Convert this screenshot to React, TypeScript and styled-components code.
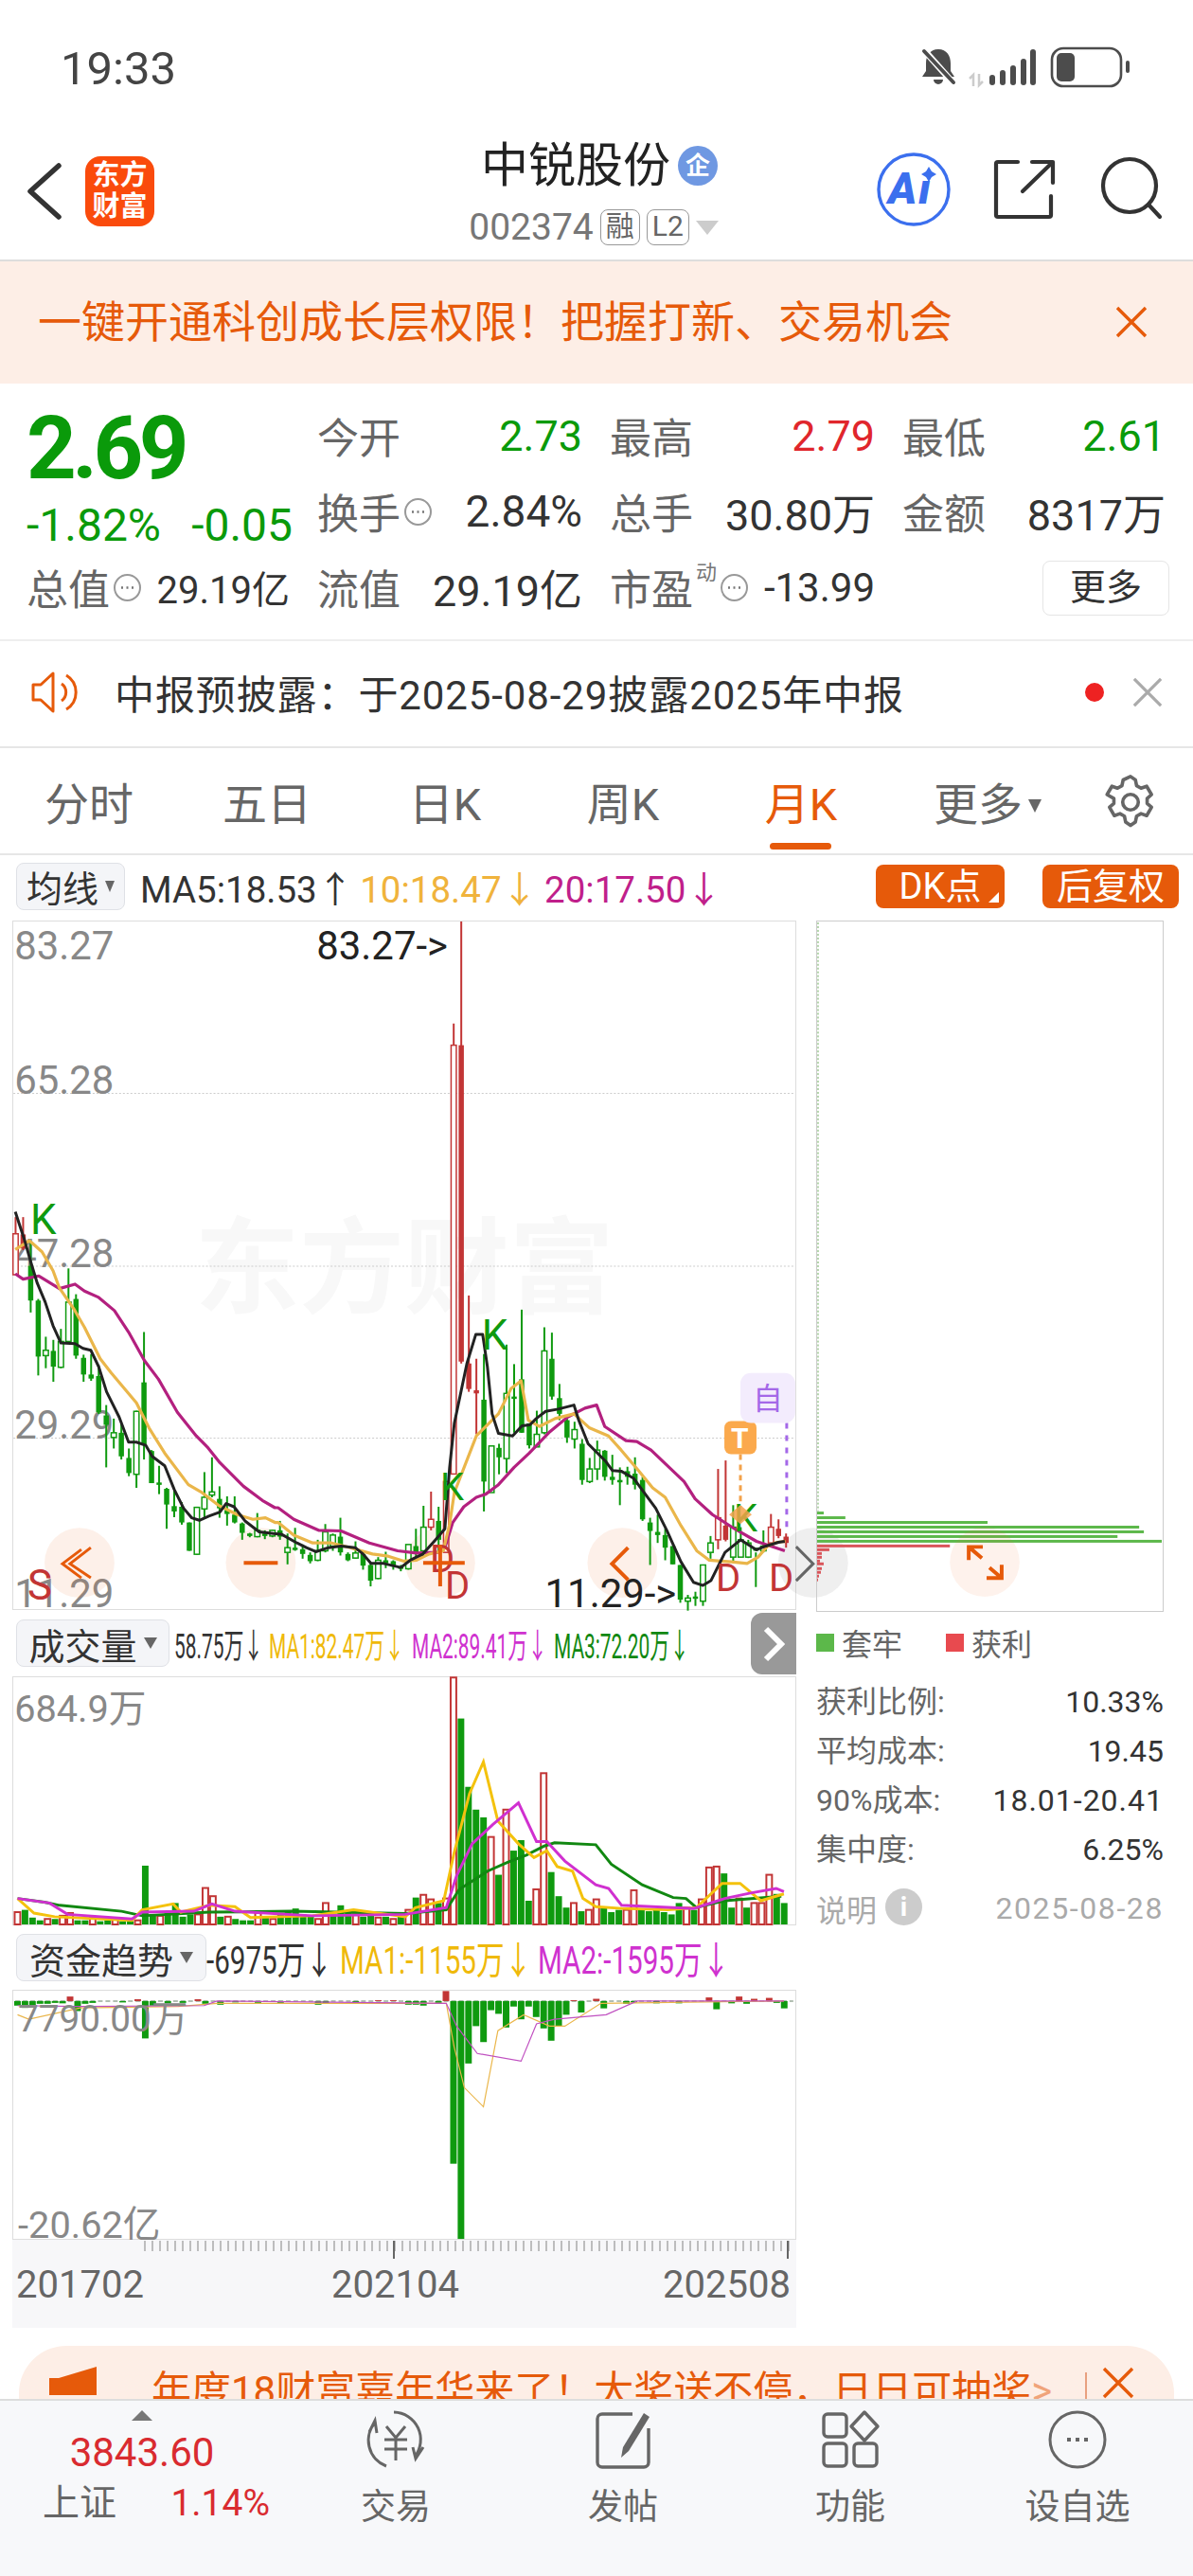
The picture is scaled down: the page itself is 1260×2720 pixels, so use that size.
import React from "react";
import styled, { createGlobalStyle } from "styled-components";

const GlobalStyle = createGlobalStyle`
  html, body {
    margin: 0;
    padding: 0;
    background: #fff;
    font-family: Roboto, "Noto Sans CJK SC", sans-serif;
  }
  * { box-sizing: border-box; }
`;

const ORANGE = "#e65a0a";
const GREEN = "#0f9a0f";
const RED = "#c23535";

const Page = styled.div`
  width: 1260px;
  height: 2720px;
  overflow: hidden;
  background: #fff;
  display: flex;
  flex-direction: column;
`;

const StatusBar = styled.div`
  height: 120px;
  padding: 0 64px;
  display: flex;
  align-items: center;
  justify-content: space-between;
  padding-top: 24px;
  color: #444;
  font-size: 49px;
  svg { margin-right: -1px; margin-top: -2px; }
`;

const NavBar = styled.div`
  height: 156px;
  border-bottom: 2px solid #ddd;
  display: grid;
  grid-template-columns: 400px 1fr 400px;
  align-items: center;
`;

const NavLeft = styled.div`
  display: flex;
  align-items: center;
  gap: 24px;
  padding-left: 28px;
  margin-top: 10px;
`;

const Logo = styled.div`
  width: 73px;
  height: 74px;
  border-radius: 16px;
  background: #fa4b0c;
  color: #fff;
  font-size: 29px;
  font-weight: 700;
  line-height: 33px;
  text-align: center;
  padding-top: 4px;
`;

const NavCenter = styled.div`
  display: flex;
  flex-direction: column;
  align-items: center;
  margin-top: 13px;
`;

const TitleRow = styled.div`
  display: flex;
  align-items: center;
  gap: 8px;
  margin-left: 6px;
  font-size: 50px;
  line-height: 60px;
  color: #222;
`;

const CorpBadge = styled.span`
  width: 42px;
  height: 42px;
  border-radius: 50%;
  background: #6f98e2;
  color: #fff;
  font-size: 26px;
  font-weight: 700;
  line-height: 42px;
  text-align: center;
`;

const CodeRow = styled.div`
  display: flex;
  align-items: center;
  gap: 7px;
  margin: 13px 0 0 -6px;
  font-size: 39px;
  line-height: 44px;
  color: #777;
`;

const TagBox = styled.span`
  height: 38px;
  padding: 0 5px;
  border: 1.5px solid #999;
  border-radius: 8px;
  font-size: 30px;
  line-height: 34px;
  color: #666;
`;

const Caret = styled.span<{ $w?: number; $h?: number; $color?: string }>`
  display: inline-block;
  width: 0;
  height: 0;
  border-left: ${(p) => (p.$w || 20) / 2}px solid transparent;
  border-right: ${(p) => (p.$w || 20) / 2}px solid transparent;
  border-top: ${(p) => p.$h || 14}px solid ${(p) => p.$color || "#666"};
`;

const NavRight = styled.div`
  display: flex;
  justify-content: flex-end;
  padding-right: 26px;
  margin-top: 4px;
`;

const PromoBanner = styled.div`
  height: 129px;
  background: #fdeee6;
  color: ${ORANGE};
  font-size: 46px;
  line-height: 60px;
  display: flex;
  align-items: center;
  justify-content: space-between;
  padding: 0 48px 2px 40px;
`;

const QuoteSection = styled.div`
  height: 272px;
  padding: 16px 25px 0 28px;
  display: grid;
  grid-template-columns: 278px 280px 280px 278px;
  grid-template-rows: 80px 80px 80px;
  column-gap: 29px;
  border-bottom: 2px solid #eee;
`;

const PriceBlock = styled.div`
  grid-row: 1 / span 2;
  display: flex;
  flex-direction: column;
`;

const BigPrice = styled.div`
  color: #0a9a0a;
  font-size: 92px;
  font-weight: 700;
  line-height: 106px;
  letter-spacing: -4.5px;
`;

const ChangeRow = styled.div`
  display: flex;
  justify-content: space-between;
  color: #0a9a0a;
  font-size: 48px;
  line-height: 54px;
  margin-top: 1px;
  width: 281px;
`;

const Cell = styled.div`
  display: flex;
  align-items: center;
  justify-content: space-between;
  white-space: nowrap;
  margin-top: -2px;
`;

const LabelGroup = styled.span`
  display: inline-flex;
  align-items: center;
  gap: 3px;
  position: relative;
`;

const Label = styled.span`
  font-size: 44px;
  color: #666;
`;

const SuperMark = styled.span`
  font-size: 22px;
  color: #777;
  margin-top: -36px;
`;

const Value = styled.span<{ $color?: string; $size?: number }>`
  font-size: ${(p) => p.$size || 45}px;
  color: ${(p) => p.$color || "#333"};
`;

const MoreButton = styled.div`
  justify-self: end;
  align-self: center;
  width: 134px;
  height: 58px;
  border: 1.5px solid #e5e5e5;
  border-radius: 8px;
  color: #333;
  font-size: 38px;
  line-height: 54px;
  text-align: center;
  margin-right: -4px;
`;

const NoticeRow = styled.div`
  height: 113px;
  display: flex;
  align-items: center;
  padding: 0 32px 4px;
  border-bottom: 2px solid #e6e6e6;
  font-size: 42px;
  letter-spacing: 0.9px;
  color: #333;
`;

const NoticeText = styled.span`
  margin-left: 33px;
  flex: 1;
`;

const RedDot = styled.span`
  width: 20px;
  height: 20px;
  border-radius: 50%;
  background: #ee2222;
  margin-right: 30px;
`;

const Tabs = styled.div`
  height: 113px;
  border-bottom: 2px solid #e6e6e6;
  display: grid;
  grid-template-columns: repeat(6, 188px) 1fr;
  align-items: center;
`;

const Tab = styled.div<{ $active?: boolean; $shift?: number }>`
  position: relative;
  text-align: center;
  font-size: 47px;
  padding-left: ${(p) => p.$shift || 0}px;
  color: ${(p) => (p.$active ? ORANGE : "#666")};
  ${(p) =>
    p.$active &&
    `&::after {
      content: "";
      position: absolute;
      left: 61px;
      bottom: -17px;
      width: 65px;
      height: 7px;
      border-radius: 4px;
      background: ${ORANGE};
    }`}
`;

const TabCaret = styled(Caret)`
  margin-left: 6px;
  vertical-align: 8px;
`;

const GearCell = styled.div`
  text-align: center;
  padding-top: 6px;
`;

const LegendRow = styled.div`
  height: 57px;
  display: flex;
  align-items: center;
  padding: 8px 15px 0 17px;
  white-space: nowrap;
`;

const SelectButton = styled.div<{ $width: number }>`
  width: ${(p) => p.$width}px;
  height: 50px;
  flex: none;
  display: flex;
  align-items: center;
  justify-content: center;
  gap: 7px;
  background: #f4f5f8;
  border: 1.5px solid #dfe1e6;
  border-radius: 8px;
  color: #333;
  font-size: 38px;
`;

const LegendText = styled.span<{ $color?: string; $left?: number }>`
  font-size: 38.5px;
  color: ${(p) => p.$color || "#333"};
  margin-left: ${(p) => p.$left || 0}px;
`;

const TagButton = styled.div<{ $width: number; $left?: string }>`
  position: relative;
  width: ${(p) => p.$width}px;
  height: 46px;
  margin-left: ${(p) => p.$left || "40px"};
  background: ${ORANGE};
  border-radius: 8px;
  color: #fff;
  font-size: 38px;
  line-height: 46px;
  text-align: center;
`;

const CornerMark = styled.span`
  position: absolute;
  right: 6px;
  bottom: 6px;
  border-left: 11px solid transparent;
  border-bottom: 11px solid #fff;
`;

const ChartArea = styled.div`
  height: 1498px;
  display: grid;
  grid-template-columns: 828px 367px;
  column-gap: 21px;
  padding: 12px 0 0 13px;
`;

const LeftColumn = styled.div`
  display: flex;
  flex-direction: column;
`;

const ChartBox = styled.svg<{ $h: number }>`
  display: block;
  width: 828px;
  height: ${(p) => p.$h}px;
  overflow: visible;
  border: 1.5px solid #ddd;
  font-family: Roboto, "Noto Sans CJK SC", sans-serif;
`;

const SubLegend = styled.div<{ $h: number }>`
  height: ${(p) => p.$h}px;
  position: relative;
  display: flex;
  align-items: center;
  padding-left: 4px;
  white-space: nowrap;
`;

const Narrow = styled.span<{ $w: number; $s: number; $color?: string; $size?: number; $mr?: number; $ml?: number }>`
  display: inline-block;
  flex: none;
  width: ${(p) => p.$w}px;
  margin-left: ${(p) => p.$ml || 0}px;
  margin-right: ${(p) => p.$mr || 0}px;
  font-size: ${(p) => p.$size || 36}px;
  color: ${(p) => p.$color || "#333"};
  transform: scaleX(${(p) => p.$s});
  transform-origin: left center;
`;

const SidePull = styled.div`
  position: absolute;
  right: 0;
  top: 3px;
  width: 48px;
  height: 65px;
  background: #999;
  border-radius: 12px 0 0 12px;
  display: flex;
  align-items: center;
  justify-content: center;
`;

const AxisBox = styled.div`
  height: 93px;
  background: #f7f7f9;
`;

const AxisLabels = styled.div`
  display: grid;
  grid-template-columns: 333px 350px auto;
  padding-left: 4px;
  margin-top: 2px;
  font-size: 40px;
  color: #666;
`;

const AxisTicks = styled.svg`
  display: block;
  width: 828px;
  height: 22px;
`;

const RightColumn = styled.div`
  display: flex;
  flex-direction: column;
`;

const ChipBox = styled.svg`
  display: block;
  width: 367px;
  height: 730px;
  overflow: visible;
  border: 1.5px solid #ccc;
`;

const ChipLegend = styled.div`
  display: flex;
  align-items: center;
  margin-top: 10px;
  height: 44px;
  font-size: 32px;
  color: #666;
`;

const Swatch = styled.span<{ $color: string; $left?: number }>`
  width: 19px;
  height: 19px;
  background: ${(p) => p.$color};
  margin-left: ${(p) => p.$left || 0}px;
  margin-right: 8px;
`;

const ChipStats = styled.div`
  margin-top: 19px;
  display: flex;
  flex-direction: column;
  gap: 8px;
`;

const ChipRow = styled.div`
  display: flex;
  justify-content: space-between;
  height: 44px;
  line-height: 44px;
  font-size: 32px;
  color: #666;
  b { font-weight: 400; color: #333; }
`;

const WideValue = styled.b`
  letter-spacing: 1px;
`;

const ChipFooter = styled.div`
  display: flex;
  align-items: center;
  justify-content: space-between;
  margin-top: 18px;
  height: 44px;
  font-size: 32px;
  color: #aaa;
`;

const FooterDate = styled.span`
  letter-spacing: 1.6px;
`;

const InfoDot = styled.span`
  display: inline-block;
  width: 39px;
  height: 39px;
  margin-left: 9px;
  border-radius: 50%;
  background: #ccc;
  color: #fff;
  font-size: 28px;
  font-weight: 700;
  line-height: 39px;
  text-align: center;
  vertical-align: top;
  margin-top: 2px;
`;

const AdBanner = styled.div`
  height: 56px;
  margin: 19px 20px 0;
  overflow: hidden;
  background: #fdeee6;
  border-radius: 50px 50px 0 0;
  display: flex;
  align-items: flex-start;
  padding: 22px 32px 0 32px;
  color: ${ORANGE};
  font-size: 42px;
  line-height: 52px;
  white-space: nowrap;
`;

const AdText = styled.span`
  margin-left: 58px;
  width: 986px;
  span { color: #f0a47a; }
`;

const AdBar = styled.span`
  width: 2px;
  height: 34px;
  margin: 6px 16px 0 0;
  background: #e8a080;
`;

const BottomBar = styled.div`
  height: 187px;
  background: #f7f8fa;
  border-top: 2px solid #ddd;
  display: grid;
  grid-template-columns: 298px repeat(4, 240px);
`;

const IndexCell = styled.div`
  padding: 10px 0 0 45px;
  display: flex;
  flex-direction: column;
`;

const IndexPrice = styled.div`
  width: 210px;
  text-align: center;
  color: #d92b30;
  font-size: 42px;
  line-height: 52px;
  margin-top: 8px;
`;

const IndexRow = styled.div`
  display: flex;
  justify-content: space-between;
  align-items: center;
  width: 240px;
  margin-top: 1px;
  font-size: 39px;
  color: #666;
  line-height: 52px;
  span { color: #d92b30; }
`;

const UpMark = styled.div`
  width: 210px;
  display: flex;
  justify-content: center;
  span {
    border-left: 11px solid transparent;
    border-right: 11px solid transparent;
    border-bottom: 11px solid #777;
  }
`;

const ActionCell = styled.div`
  display: flex;
  flex-direction: column;
  align-items: center;
  padding-top: 9px;
  color: #666;
  font-size: 37px;
  line-height: 44px;
  svg { display: block; margin-bottom: 18px; }
`;

type Pt = [number, number];

const z7 = (x: number, y: number): Pt => [10 + x / 3, 1260 + y / 3];
const z8 = (x: number, y: number): Pt => [280 + x / 3, 1400 + y / 3];
const z9 = (x: number, y: number): Pt => [560 + x / 3, 1400 + y / 3];
const z4 = (x: number, y: number): Pt => [x / 1.823, 1700 + y / 2.063];

// high, low, body top, body bottom, kind (g/h green filled/hollow, r/o red filled/hollow)
type Candle = [number, number, number, number, string];

const seg7: Candle[] = [
  [75, 258, 128, 258, "o"], [75, 180, 130, 175, "r"], [150, 378, 230, 340, "g"], [335, 578, 340, 518, "g"],
  [455, 555, 498, 515, "h"], [465, 598, 500, 550, "g"], [430, 555, 470, 552, "h"], [238, 470, 345, 470, "h"],
  [320, 525, 335, 515, "g"], [512, 598, 522, 575, "g"], [510, 595, 575, 588, "g"], [545, 700, 580, 695, "g"],
  [672, 870, 705, 735, "g"], [715, 810, 760, 775, "h"], [730, 845, 760, 835, "g"], [810, 898, 840, 888, "g"],
  [690, 935, 692, 892, "h"], [440, 845, 600, 800, "g"], [815, 920, 818, 920, "g"], [865, 955, 918, 922, "g"],
  [935, 1065, 938, 988, "g"], [940, 1028, 993, 1010, "g"], [980, 1052, 995, 1045, "g"], [1045, 1135, 1045, 1135, "g"],
  [995, 1148, 997, 1146, "h"], [885, 1030, 965, 1002, "h"], [838, 965, 948, 958, "h"], [930, 1030, 970, 1000, "g"],
  [962, 1055, 1005, 1018, "g"], [962, 1048, 1020, 1045, "g"], [1045, 1100, 1048, 1078, "g"], [1078, 1092, 1080, 1088, "g"],
  [1015, 1092, 1070, 1090, "h"], [1070, 1098, 1080, 1088, "g"], [1068, 1092, 1070, 1088, "h"],
];

const seg8: Candle[] = [
  [620, 680, 650, 670, "g"], [660, 758, 705, 720, "h"], [642, 715, 705, 712, "g"], [695, 740, 710, 725, "g"],
  [720, 755, 728, 748, "g"], [680, 748, 715, 745, "h"], [630, 720, 655, 715, "h"], [660, 715, 665, 700, "h"],
  [610, 730, 670, 720, "g"], [720, 748, 725, 745, "g"], [685, 740, 722, 738, "h"], [715, 775, 725, 762, "g"],
  [755, 828, 760, 810, "g"], [735, 805, 745, 803, "h"], [718, 770, 745, 755, "g"], [745, 775, 748, 765, "g"],
  [760, 780, 765, 772, "g"], [695, 775, 695, 772, "h"], [645, 735, 700, 725, "g"], [572, 735, 640, 715, "h"],
  [527, 650, 615, 640, "o"], [575, 720, 620, 680, "g"], [495, 720, 495, 720, "o"], [-960, 471, -891, 471, "o"],
  [-1284, 120, -891, 114, "r"], [-96, 210, 120, 201, "r"], [105, 345, 205, 215, "r"], [90, 590, 235, 495, "g"],
  [382, 530, 382, 530, "h"], [375, 472, 388, 418, "g"], [60, 468, 215, 422, "h"], [122, 340, 225, 232, "g"],
  [-51, 340, 170, 340, "g"], [310, 390, 310, 380, "g"],
];

const seg9: Candle[] = [
  [270, 385, 345, 385, "h"], [5, 345, 80, 340, "h"], [22, 235, 105, 225, "g"], [185, 300, 230, 280, "g"],
  [295, 372, 300, 355, "g"], [305, 390, 330, 360, "h"], [360, 505, 375, 490, "g"], [420, 500, 455, 495, "h"],
  [365, 490, 395, 455, "h"], [395, 492, 397, 480, "g"], [410, 505, 480, 490, "g"], [450, 570, 490, 493, "g"],
  [448, 505, 462, 480, "g"], [418, 520, 470, 505, "g"], [480, 620, 490, 615, "g"], [610, 760, 625, 652, "g"],
  [600, 690, 655, 665, "g"], [645, 745, 665, 705, "g"], [700, 758, 700, 758, "g"], [760, 880, 760, 870, "g"],
  [855, 905, 865, 875, "h"], [845, 890, 860, 865, "g"], [760, 890, 760, 875, "h"], [668, 740, 690, 720, "h"],
  [455, 710, 610, 680, "o"], [428, 685, 635, 680, "r"], [570, 750, 640, 735, "h"], [640, 735, 680, 735, "h"],
  [680, 738, 690, 735, "h"], [720, 830, 705, 715, "g"], [650, 720, 700, 715, "h"], [598, 700, 640, 690, "o"],
  [615, 675, 645, 668, "r"], [660, 705, 670, 690, "r"],
];

const candles: Candle[] = [
  ...seg7.map(([h, l, t, b, k]): Candle => [z7(0, h)[1], z7(0, l)[1], z7(0, t)[1], z7(0, b)[1], k]),
  ...seg8.map(([h, l, t, b, k]): Candle => [z8(0, h)[1], z8(0, l)[1], z8(0, t)[1], z8(0, b)[1], k]),
  ...seg9.map(([h, l, t, b, k]): Candle => [z9(0, h)[1], z9(0, l)[1], z9(0, t)[1], z9(0, b)[1], k]),
];

const barX = (i: number) => 15.33 + 8 * i;

const toPoints = (pts: Pt[]) => pts.map((p) => `${p[0].toFixed(1)},${p[1].toFixed(1)}`).join(" ");
const mapPts = (fn: (x: number, y: number) => Pt, raw: number[][]) => raw.map((p) => fn(p[0], p[1]));

const blackLine = toPoints([
  ...mapPts(z7, [[15, 58], [45, 150], [65, 220], [85, 285], [110, 345], [135, 420], [160, 475], [205, 477], [230, 492], [255, 498], [280, 550], [305, 630], [345, 710], [375, 790], [400, 790], [430, 800], [450, 835], [490, 865], [520, 940], [550, 1000], [575, 1030], [600, 1038], [630, 1025], [665, 1012], [685, 985], [710, 995], [745, 1040], [790, 1075], [835, 1080]]),
  ...mapPts(z8, [[50, 662], [100, 690], [130, 705], [160, 718], [200, 705], [240, 700], [285, 705], [310, 725], [335, 755], [375, 755], [430, 768], [460, 745], [500, 725], [540, 680], [570, 645], [585, 450], [600, 310], [640, 120], [668, 28], [690, 28], [705, 130], [720, 280], [740, 342], [785, 350], [815, 318], [840, 315]]),
  ...mapPts(z9, [[20, 295], [50, 272], [90, 265], [140, 252], [155, 300], [185, 375], [240, 430], [262, 460], [290, 462], [330, 485], [400, 580], [435, 650], [480, 750], [520, 815], [550, 825], [575, 810], [620, 720], [670, 680], [720, 712], [750, 700], [790, 688], [810, 685]]),
]);

const orangeLine = toPoints([
  ...mapPts(z7, [[15, 178], [60, 150], [100, 185], [135, 245], [155, 300], [200, 365], [235, 425], [285, 525], [320, 570], [400, 665], [440, 745], [490, 825], [565, 925], [605, 948], [660, 990], [720, 1020], [770, 1035], [810, 1030], [840, 1045]]),
  ...mapPts(z8, [[40, 625], [90, 665], [150, 690], [210, 690], [270, 705], [340, 725], [390, 732], [440, 748], [480, 745], [520, 725], [565, 715], [585, 630], [600, 530], [670, 350], [740, 280], [780, 200], [812, 175], [835, 300]]),
  ...mapPts(z9, [[30, 320], [80, 295], [140, 280], [190, 325], [250, 350], [290, 395], [345, 460], [390, 515], [430, 545], [480, 635], [530, 715], [570, 745], [640, 750], [690, 755], [725, 735], [755, 700], [785, 688], [812, 685]]),
]);

const magentaLine = toPoints([
  ...mapPts(z7, [[15, 255], [40, 272], [90, 262], [155, 302], [205, 288], [235, 310], [280, 330], [330, 372], [375, 440], [425, 530], [470, 590], [530, 695], [590, 770], [625, 805], [665, 855], [740, 930], [800, 975], [840, 998]]),
  ...mapPts(z8, [[40, 578], [90, 615], [170, 650], [240, 652], [330, 690], [420, 715], [480, 722], [550, 720], [570, 705], [595, 625], [630, 575], [670, 545], [700, 535], [740, 505], [790, 450], [838, 405]]),
  ...mapPts(z9, [[60, 340], [120, 290], [175, 262], [212, 252], [238, 320], [305, 365], [340, 368], [385, 395], [490, 495], [525, 550], [580, 600], [650, 645], [720, 685], [810, 715]]),
]);

// top of each volume bar, in the zoomed crop's y units; r = hollow red, g = solid green
const volume: [number, string][] = [
  [660, "r"], [655, "g"], [672, "g"], [678, "g"], [675, "r"], [675, "g"], [668, "r"], [662, "r"], [678, "g"], [678, "g"],
  [672, "r"], [680, "g"], [678, "g"], [675, "r"], [680, "g"], [680, "g"], [678, "r"], [558, "g"], [665, "g"], [668, "r"],
  [660, "g"], [640, "g"], [670, "g"], [665, "g"], [665, "r"], [607, "r"], [625, "r"], [670, "g"], [670, "r"], [675, "g"],
  [678, "g"], [678, "g"], [662, "r"], [672, "g"], [675, "r"], [665, "g"], [660, "g"], [652, "g"], [665, "g"], [670, "g"],
  [675, "r"], [640, "r"], [665, "g"], [645, "g"], [660, "g"], [665, "r"], [670, "g"], [665, "g"], [672, "r"], [670, "g"],
  [675, "r"], [668, "g"], [655, "r"], [628, "g"], [622, "r"], [632, "r"], [640, "g"], [630, "r"], [145, "r"], [235, "g"],
  [385, "g"], [435, "g"], [452, "g"], [495, "r"], [578, "g"], [435, "r"], [525, "g"], [502, "g"], [635, "g"], [610, "r"],
  [355, "r"], [572, "g"], [625, "g"], [650, "g"], [640, "r"], [658, "g"], [655, "r"], [632, "r"], [650, "g"], [660, "g"],
  [655, "g"], [655, "r"], [612, "r"], [655, "g"], [658, "g"], [652, "g"], [660, "g"], [665, "g"], [640, "g"], [650, "r"],
  [655, "g"], [632, "r"], [562, "r"], [560, "r"], [575, "g"], [650, "g"], [630, "r"], [650, "g"], [640, "r"], [640, "r"],
  [578, "r"], [620, "g"], [640, "g"],
];

const volMa1 = toPoints(mapPts(z4, [[28, 630], [60, 662], [100, 670], [250, 678], [270, 655], [330, 642], [345, 660], [400, 645], [450, 648], [480, 672], [600, 668], [680, 655], [780, 670], [800, 650], [855, 635], [875, 530], [905, 400], [932, 330], [960, 460], [1000, 510], [1030, 540], [1055, 525], [1075, 560], [1105, 570], [1125, 630], [1150, 648], [1200, 652], [1290, 655], [1345, 650], [1395, 597], [1430, 597], [1470, 635], [1515, 620]]));
const volMa2 = toPoints(mapPts(z4, [[28, 630], [90, 640], [125, 665], [250, 675], [270, 660], [370, 658], [405, 642], [450, 658], [600, 668], [780, 665], [860, 650], [880, 580], [910, 510], [950, 468], [1000, 420], [1035, 505], [1055, 505], [1090, 548], [1150, 600], [1175, 608], [1200, 645], [1340, 652], [1400, 630], [1450, 618], [1500, 608], [1515, 615]]));
const volMa3 = toPoints(mapPts(z4, [[28, 630], [80, 638], [110, 645], [230, 658], [270, 668], [400, 660], [560, 658], [780, 663], [860, 655], [885, 610], [940, 570], [980, 550], [1015, 535], [1050, 515], [1070, 508], [1150, 512], [1180, 555], [1240, 600], [1300, 628], [1325, 630], [1345, 650], [1400, 635], [1510, 625]]));

// fund flow bars: index -> end y in the crop's units (zero line at 850)
const fundBars: Record<number, number> = {
  0: 860, 1: 865, 2: 862, 3: 856, 4: 856, 5: 854, 6: 855, 7: 840, 8: 872, 9: 856, 10: 854, 14: 853, 16: 846, 17: 932, 18: 860,
  20: 855, 22: 854, 24: 846, 25: 856, 27: 858, 29: 853, 32: 854, 35: 854, 40: 858, 41: 855, 45: 856, 48: 848, 50: 848, 52: 858, 53: 858, 54: 860, 56: 854,
  57: 828, 58: 1207, 59: 1372, 60: 987, 61: 905, 62: 940, 63: 870, 64: 878, 65: 908, 66: 862, 67: 890, 68: 862, 69: 885,
  70: 910, 71: 937, 72: 905, 73: 880, 74: 848, 75: 875, 77: 845, 78: 866, 81: 856, 82: 853, 85: 855, 88: 855,
  92: 842, 93: 868, 95: 855, 96: 840, 97: 856, 98: 845, 100: 843, 101: 854, 102: 866,
};

const fundMa1 = toPoints(mapPts(z4, [[28, 880], [50, 890], [150, 865], [340, 862], [415, 855], [860, 855], [875, 950], [895, 1040], [932, 1082], [960, 915], [1010, 880], [1060, 905], [1090, 905], [1160, 855], [1515, 850]]));
const fundMa2 = toPoints(mapPts(z4, [[28, 860], [150, 862], [390, 860], [415, 850], [860, 855], [880, 905], [920, 965], [1005, 982], [1035, 900], [1070, 890], [1170, 880], [1230, 850], [1515, 850]]));

const chipBars: [number, number, string][] = [
  [1599, 7, "#5cb84a"], [1604, 30, "#5cb84a"], [1609, 181, "#5cb84a"], [1614, 342, "#5cb84a"], [1619, 347, "#5cb84a"],
  [1624, 319, "#5cb84a"], [1629, 366, "#5cb84a"], [1634, 141, "#d9555a"], [1638, 13, "#d9555a"], [1642, 5, "#d9555a"],
  [1646, 5, "#d9555a"], [1650, 3, "#d9555a"], [1653, 7, "#d9555a"], [1658, 5, "#d9555a"], [1662, 4, "#d9555a"], [1666, 2, "#d9555a"], [1670, 1, "#d9555a"],
];

const CloseIcon = ({ color, size = 34 }: { color: string; size?: number }) => (
  <svg width={size} height={size} viewBox="0 0 34 34">
    <path d="M2 2 L32 32 M32 2 L2 32" stroke={color} strokeWidth="3.4" fill="none" />
  </svg>
);

const HelpDot = () => (
  <svg width="31" height="31" viewBox="0 0 31 31">
    <circle cx="15.5" cy="15.5" r="13.5" fill="none" stroke="#999" strokeWidth="2" />
    <path d="M9 15.5h2M14.5 15.5h2M20 15.5h2" stroke="#777" strokeWidth="2.5" />
  </svg>
);

const Chevron = () => (
  <svg width="24" height="38" viewBox="0 0 24 38">
    <path d="M4 3 L20 19 L4 35" fill="none" stroke="#fff" strokeWidth="6" />
  </svg>
);

const Candles = () => (
  <g>
    {candles.map(([h, l, t, b, k], i) => {
      const x = barX(i);
      const color = k === "r" || k === "o" ? RED : GREEN;
      const hollow = k === "h" || k === "o";
      return (
        <g key={i}>
          <line x1={x} x2={x} y1={h} y2={l} stroke={color} strokeWidth="2" />
          {hollow ? (
            <rect x={x - 2.75} width={5.5} y={t} height={Math.max(b - t, 2)} fill="#fff" stroke={color} strokeWidth="1.5" />
          ) : (
            <rect x={x - 2.75} width={5.5} y={t} height={Math.max(b - t, 2.5)} fill={color} />
          )}
        </g>
      );
    })}
  </g>
);

const RoundHint = ({ cx, gray }: { cx: number; gray?: boolean }) => (
  <circle cx={cx} cy={1651} r={37} fill={gray ? "rgba(120,120,120,0.12)" : "rgba(240,110,40,0.1)"} />
);

const ChartText = styled.text<{ $size?: number; $color?: string }>`
  font-size: ${(p) => p.$size || 42}px;
  fill: ${(p) => p.$color || "#888"};
`;

const MainChart = () => (
  <ChartBox $h={728} viewBox="13 972 828 728">
    <ChartText x="205" y="1378" $size={111} $color="#f8f8f8" style={{ fontWeight: 700 }}>东方财富</ChartText>
    {[1154, 1337, 1519].map((y) => (
      <line key={y} x1="13" x2="841" y1={y} y2={y} stroke="#ccc" strokeWidth="1" strokeDasharray="2 2" />
    ))}
    <ChartText x="14" y="1012">83.27</ChartText>
    <ChartText x="14" y="1155">65.28</ChartText>
    <ChartText x="14" y="1338">47.28</ChartText>
    <ChartText x="14" y="1520">29.29</ChartText>
    <ChartText x="14" y="1698">11.29</ChartText>
    <RoundHint cx={83} />
    <RoundHint cx={275} />
    <RoundHint cx={465} />
    <RoundHint cx={658} />
    <RoundHint cx={860} gray />
    <Candles />
    <polyline points={magentaLine} fill="none" stroke="#b3207f" strokeWidth="3.2" strokeLinejoin="round" />
    <polyline points={orangeLine} fill="none" stroke="#eab64a" strokeWidth="3.2" strokeLinejoin="round" />
    <polyline points={blackLine} fill="none" stroke="#222" strokeWidth="3" strokeLinejoin="round" />
    <ChartText x="31" y="1303" $color={GREEN} $size={44}>K</ChartText>
    <ChartText x="509" y="1425" $color={GREEN} $size={44}>K</ChartText>
    <ChartText x="465" y="1585" $color={GREEN} $size={40}>K</ChartText>
    <ChartText x="776" y="1618" $color={GREEN} $size={40}>K</ChartText>
    <ChartText x="28" y="1690" $color={RED} $size={44}>S</ChartText>
    <ChartText x="454" y="1661" $color={RED} $size={40}>D</ChartText>
    <ChartText x="470" y="1689" $color={RED} $size={40}>D</ChartText>
    <ChartText x="757" y="1681" $color={RED} $size={40}>D</ChartText>
    <ChartText x="813" y="1681" $color={RED} $size={40}>D</ChartText>
    <ChartText x="334" y="1012" $color="#222">83.27-&gt;</ChartText>
    <ChartText x="576" y="1698" $color="#222">11.29-&gt;</ChartText>
    <path d="M85 1637 L65 1652 L85 1667 M95 1635 L73 1652 L95 1667" fill="none" stroke={ORANGE} strokeWidth="3" />
    <path d="M257 1651h36" stroke={ORANGE} strokeWidth="4" />
    <path d="M447 1651h44M465 1632v44" stroke={ORANGE} strokeWidth="4" />
    <path d="M664 1635 L647 1652 L664 1669" fill="none" stroke={ORANGE} strokeWidth="4" />
    <path d="M842 1634 L860 1652 L842 1670" fill="none" stroke="#666" strokeWidth="3" />
    <line x1="783" x2="783" y1="1536" y2="1592" stroke="#f3a24b" strokeWidth="3" strokeDasharray="6 5" />
    <path d="M783 1590 L795 1600 L783 1610 L771 1600 Z" fill="#f3a24b" opacity="0.85" />
    <rect x="766" y="1501" width="34" height="35" rx="7" fill="#fba94c" />
    <ChartText x="773" y="1530" $size={30} $color="#fff" style={{ fontWeight: 700 }}>T</ChartText>
    <line x1="832" x2="832" y1="1503" y2="1620" stroke="#a468e8" strokeWidth="3" strokeDasharray="6 7" />
    <rect x="783" y="1450" width="58" height="53" rx="11" fill="#f3ecfd" />
    <ChartText x="796" y="1488" $size={32} $color="#a468e8">自</ChartText>
  </ChartBox>
);

const VolumeChart = () => (
  <ChartBox $h={263} viewBox="13 1770 828 263">
    {volume.map(([top, k], i) => {
      const y = z4(0, top)[1];
      const x = barX(i);
      return k === "g" ? (
        <rect key={i} x={x - 3.5} y={y} width={7} height={2033 - y} fill={GREEN} />
      ) : (
        <rect key={i} x={x - 3} y={y} width={6} height={2033 - y} fill="#fff" stroke={RED} strokeWidth="2" />
      );
    })}
    <polyline points={volMa3} fill="none" stroke="#118811" strokeWidth="3" />
    <polyline points={volMa1} fill="none" stroke="#f4c20d" strokeWidth="3" />
    <polyline points={volMa2} fill="none" stroke="#d030d0" strokeWidth="3" />
    <ChartText x="12" y="1817" $size={40}>684.9万</ChartText>
  </ChartBox>
);

const FundChart = () => (
  <ChartBox $h={264} viewBox="13 2101 828 264">
    <line x1="13" x2="841" y1="2112" y2="2112" stroke="#9a9" strokeWidth="1.5" strokeDasharray="5 3" />
    {Object.keys(fundBars).map((key) => {
      const i = Number(key);
      const end = z4(0, fundBars[i])[1];
      const up = end < 2112;
      return (
        <rect
          key={i}
          x={barX(i) - 3.5}
          y={up ? end : 2112}
          width={7}
          height={Math.abs(end - 2112)}
          fill={up ? RED : GREEN}
        />
      );
    })}
    <polyline points={fundMa1} fill="none" stroke="#eab64a" strokeWidth="1.2" />
    <polyline points={fundMa2} fill="none" stroke="#c050c0" strokeWidth="1.2" />
    <ChartText x="16" y="2144" $size={39}>7790.00万</ChartText>
    <ChartText x="16" y="2364" $size={40}>-20.62亿</ChartText>
  </ChartBox>
);

const Ticks = () => (
  <AxisTicks viewBox="13 2365 828 22">
    {Array.from({ length: 86 }).map((_, i) => {
      const x = 153 + i * 8;
      return <line key={i} x1={x} x2={x} y1="2366" y2="2377" stroke="#aaa" strokeWidth="1.5" />;
    })}
    <line x1="416" x2="416" y1="2366" y2="2385" stroke="#666" strokeWidth="2" />
    <line x1="832" x2="832" y1="2366" y2="2385" stroke="#666" strokeWidth="2" />
  </AxisTicks>
);

const ChipChart = () => (
  <ChipBox viewBox="862 972 367 730">
    <line x1="863" x2="863" y1="972" y2="1597" stroke="#6aaa5a" strokeWidth="1" strokeDasharray="2 2" />
    {chipBars.map(([y, w, c]) => (
      <rect key={y} x="862" y={y - 1.5} width={w} height="3" fill={c} />
    ))}
    <circle cx="1040" cy="1651" r="37" fill="rgba(240,110,40,0.09)" />
    <path d="M1038 1635H1023V1649M1023 1635L1037 1647M1042 1668H1058V1654M1058 1668L1045 1657" fill="none" stroke={ORANGE} strokeWidth="4" />
  </ChipBox>
);

export default function App() {
  return (
    <Page>
      <GlobalStyle />
      <StatusBar>
        <span>19:33</span>
        <svg width="228" height="44" viewBox="968 50 228 44">
          <path d="M990 53c-9 0-13 7-13 15v8l-4 6h34l-4-6v-8c0-8-4-15-13-15zM985 85a5 5 0 0 0 10 0z" fill="#4c4c4c" />
          <path d="M975 54 L1006 89" stroke="#fff" strokeWidth="7" />
          <path d="M975 55 L1006 88" stroke="#4c4c4c" strokeWidth="4" strokeLinecap="round" />
          <path d="M1027 92V80l-4 4M1033 79v12l4-4" fill="none" stroke="#ccc" strokeWidth="2.5" />
          <rect x="1044" y="80" width="6" height="11" rx="3" fill="#4c4c4c" />
          <rect x="1055" y="75" width="6" height="16" rx="3" fill="#4c4c4c" />
          <rect x="1066" y="70" width="6" height="21" rx="3" fill="#4c4c4c" />
          <rect x="1077" y="63" width="6" height="28" rx="3" fill="#4c4c4c" />
          <rect x="1087" y="53" width="6" height="38" rx="3" fill="#4c4c4c" />
          <rect x="1110" y="52" width="73" height="40" rx="12" fill="none" stroke="#4c4c4c" strokeWidth="2.6" />
          <rect x="1115" y="57" width="19" height="30" rx="5" fill="#4c4c4c" />
          <rect x="1188" y="65" width="4" height="13" rx="2" fill="#4c4c4c" />
        </svg>
      </StatusBar>

      <NavBar>
        <NavLeft>
          <svg width="38" height="60" viewBox="0 0 38 60">
            <path d="M34 3 L4 30 L34 57" fill="none" stroke="#333" strokeWidth="5.5" strokeLinecap="round" strokeLinejoin="round" />
          </svg>
          <Logo>东方<br />财富</Logo>
        </NavLeft>
        <NavCenter>
          <TitleRow>中锐股份<CorpBadge>企</CorpBadge></TitleRow>
          <CodeRow>
            002374<TagBox>融</TagBox><TagBox>L2</TagBox>
            <Caret $w={24} $h={15} $color="#ccc" />
          </CodeRow>
        </NavCenter>
        <NavRight>
          <svg width="310" height="80" viewBox="924 162 310 80">
            <circle cx="965" cy="203" r="37" fill="none" stroke="#3b6fee" strokeWidth="3.4" />
            <text x="938" y="218" fontSize="46" fontWeight="900" fontStyle="italic" fontFamily="Roboto, sans-serif" fill="#3b6fee">A</text>
            <text x="970" y="218" fontSize="46" fontWeight="900" fontStyle="italic" fontFamily="Roboto, sans-serif" fill="#3b6fee">ı</text>
            <path d="M981 179l3 5 5 3-5 3-3 5-3-5-5-3 5-3z" fill="#3b6fee" />
            <path d="M1075 174h-21a2 2 0 0 0-2 2v54a2 2 0 0 0 2 2h54a2 2 0 0 0 2-2v-20M1090 174h22v22M1111 175 L1080 205" fill="none" stroke="#333" strokeWidth="4.2" strokeLinecap="round" strokeLinejoin="round" />
            <circle cx="1193" cy="199" r="28" fill="none" stroke="#333" strokeWidth="4.2" />
            <path d="M1213 219 L1225 232" stroke="#333" strokeWidth="4.2" strokeLinecap="round" />
          </svg>
        </NavRight>
      </NavBar>

      <PromoBanner>
        <span>一键开通科创成长层权限！把握打新、交易机会</span>
        <CloseIcon color={ORANGE} />
      </PromoBanner>

      <QuoteSection>
        <PriceBlock>
          <BigPrice>2.69</BigPrice>
          <ChangeRow><span>-1.82%</span><span>-0.05</span></ChangeRow>
        </PriceBlock>
        <Cell><Label>今开</Label><Value $color="#0a9a0a">2.73</Value></Cell>
        <Cell><Label>最高</Label><Value $color="#e0262c">2.79</Value></Cell>
        <Cell><Label>最低</Label><Value $color="#0a9a0a">2.61</Value></Cell>
        <Cell><LabelGroup><Label>换手</Label><HelpDot /></LabelGroup><Value $size={46}>2.84%</Value></Cell>
        <Cell><Label>总手</Label><Value>30.80万</Value></Cell>
        <Cell><Label>金额</Label><Value>8317万</Value></Cell>
        <Cell><LabelGroup><Label>总值</Label><HelpDot /></LabelGroup><Value $size={40}>29.19亿</Value></Cell>
        <Cell><Label>流值</Label><Value $size={45}>29.19亿</Value></Cell>
        <Cell><LabelGroup><Label>市盈</Label><SuperMark>动</SuperMark><HelpDot /></LabelGroup><Value $size={42}>-13.99</Value></Cell>
        <MoreButton>更多</MoreButton>
      </QuoteSection>

      <NoticeRow>
        <svg width="56" height="48" viewBox="0 0 56 48">
          <path d="M3 16h8L24 4v40L11 32H3z" fill="none" stroke={ORANGE} strokeWidth="3" strokeLinejoin="round" />
          <path d="M33 15a11 11 0 0 1 0 18M38 6a21 21 0 0 1 0 36" fill="none" stroke={ORANGE} strokeWidth="3" />
        </svg>
        <NoticeText>中报预披露：于2025-08-29披露2025年中报</NoticeText>
        <RedDot />
        <CloseIcon color="#aaa" size={32} />
      </NoticeRow>

      <Tabs>
        <Tab>分时</Tab>
        <Tab>五日</Tab>
        <Tab>日K</Tab>
        <Tab>周K</Tab>
        <Tab $active>月K</Tab>
        <Tab $shift={18}>更多<TabCaret $w={14} $h={14} /></Tab>
        <GearCell>
          <svg width="62" height="62" viewBox="0 0 24 24" fill="none" stroke="#666" strokeWidth="1.4" strokeLinejoin="round">
            <path d="M12 1.500l2 1.400.5 2.400 1.800 1 2.300-.8 2 3.400-1.800 1.600v2l1.800 1.600-2 3.400-2.300-.8-1.800 1-.5 2.400-2 1.400-2-1.400-.5-2.400-1.800-1-2.300.8-2-3.400 1.800-1.600v-2L2.400 8.900l2-3.400 2.300.8 1.800-1 .5-2.400z" />
            <circle cx="12" cy="12" r="3.200" />
          </svg>
        </GearCell>
      </Tabs>

      <LegendRow>
        <SelectButton $width={115}>均线<Caret $w={10} $h={12} /></SelectButton>
        <LegendText $left={16}>MA5:18.53↑</LegendText>
        <LegendText $color="#f0b33c" $left={7}>10:18.47↓</LegendText>
        <LegendText $color="#c01f8b" $left={7}>20:17.50↓</LegendText>
        <TagButton $width={136} $left="auto">DK点<CornerMark /></TagButton>
        <TagButton $width={144}>后复权</TagButton>
      </LegendRow>

      <ChartArea>
        <LeftColumn>
          <MainChart />
          <SubLegend $h={70}>
            <SelectButton $width={162}>成交量<Caret $w={14} $h={12} /></SelectButton>
            <Narrow $w={96} $s={0.58} $ml={5} $mr={4}>58.75万↓</Narrow>
            <Narrow $w={140} $s={0.58} $mr={11} $color="#efb90a">MA1:82.47万↓</Narrow>
            <Narrow $w={140} $s={0.58} $mr={10} $color="#cf32cf">MA2:89.41万↓</Narrow>
            <Narrow $w={140} $s={0.58} $color="#118811">MA3:72.20万↓</Narrow>
            <SidePull><Chevron /></SidePull>
          </SubLegend>
          <VolumeChart />
          <SubLegend $h={68}>
            <SelectButton $width={201}>资金趋势<Caret $w={14} $h={12} /></SelectButton>
            <Narrow $w={136} $s={0.74} $size={40} $mr={5}>-6975万↓</Narrow>
            <Narrow $w={199} $s={0.74} $size={40} $mr={10} $color="#efb90a">MA1:-1155万↓</Narrow>
            <Narrow $w={199} $s={0.74} $size={40} $color="#cf32cf">MA2:-1595万↓</Narrow>
          </SubLegend>
          <FundChart />
          <AxisBox>
            <Ticks />
            <AxisLabels><span>201702</span><span>202104</span><span>202508</span></AxisLabels>
          </AxisBox>
        </LeftColumn>
        <RightColumn>
          <ChipChart />
          <ChipLegend>
            <Swatch $color="#5cb84a" />套牢
            <Swatch $color="#e84a4f" $left={46} />获利
          </ChipLegend>
          <ChipStats>
            <ChipRow><span>获利比例:</span><b>10.33%</b></ChipRow>
            <ChipRow><span>平均成本:</span><b>19.45</b></ChipRow>
            <ChipRow><span>90%成本:</span><WideValue>18.01-20.41</WideValue></ChipRow>
            <ChipRow><span>集中度:</span><b>6.25%</b></ChipRow>
          </ChipStats>
          <ChipFooter>
            <span>说明<InfoDot>i</InfoDot></span>
            <FooterDate>2025-08-28</FooterDate>
          </ChipFooter>
        </RightColumn>
      </ChartArea>

      <AdBanner>
        <svg width="50" height="30" viewBox="0 0 50 30">
          <path d="M0 30V12h10L50 0v30z" fill={ORANGE} />
        </svg>
        <AdText>年度18财富嘉年华来了！大奖送不停，日日可抽奖<span>&gt;</span></AdText>
        <AdBar />
        <CloseIcon color={ORANGE} size={34} />
      </AdBanner>

      <BottomBar>
        <IndexCell>
          <UpMark><span /></UpMark>
          <IndexPrice>3843.60</IndexPrice>
          <IndexRow>上证<span>1.14%</span></IndexRow>
        </IndexCell>
        <ActionCell>
          <svg width="72" height="64" viewBox="0 0 72 64" fill="none" stroke="#666" strokeWidth="3">
            <path d="M26 60A29 29 0 0 1 15 13M8 24l6-12 2 13M34 3a29 29 0 0 1 22 47M65 40l-8 12-3-12" />
            <path d="M26 18l10 12 10-12M24 32h24M24 42h24M36 30v24" />
          </svg>
          交易
        </ActionCell>
        <ActionCell>
          <svg width="72" height="64" viewBox="0 0 72 64" fill="none" stroke="#666" strokeWidth="3.4" strokeLinejoin="round">
            <path d="M46 5H14a5 5 0 0 0-5 5v46a5 5 0 0 0 5 5h44a5 5 0 0 0 5-5V20" />
            <path d="M58 4l6 4-22 36-8 7 2-11z" fill="#666" stroke="none" />
          </svg>
          发帖
        </ActionCell>
        <ActionCell>
          <svg width="72" height="64" viewBox="0 0 72 64" fill="none" stroke="#666" strokeWidth="3.4" strokeLinejoin="round">
            <rect x="8" y="5" width="24" height="24" rx="4" />
            <path d="M51 3l14 15-14 15-14-15z" />
            <rect x="8" y="36" width="24" height="24" rx="4" />
            <rect x="40" y="36" width="24" height="24" rx="4" />
          </svg>
          功能
        </ActionCell>
        <ActionCell>
          <svg width="72" height="64" viewBox="0 0 72 64" fill="none" stroke="#666" strokeWidth="3">
            <circle cx="36" cy="32" r="29" />
            <path d="M25 32h4M34 32h4M43 32h4" strokeWidth="4" />
          </svg>
          设自选
        </ActionCell>
      </BottomBar>
    </Page>
  );
}
